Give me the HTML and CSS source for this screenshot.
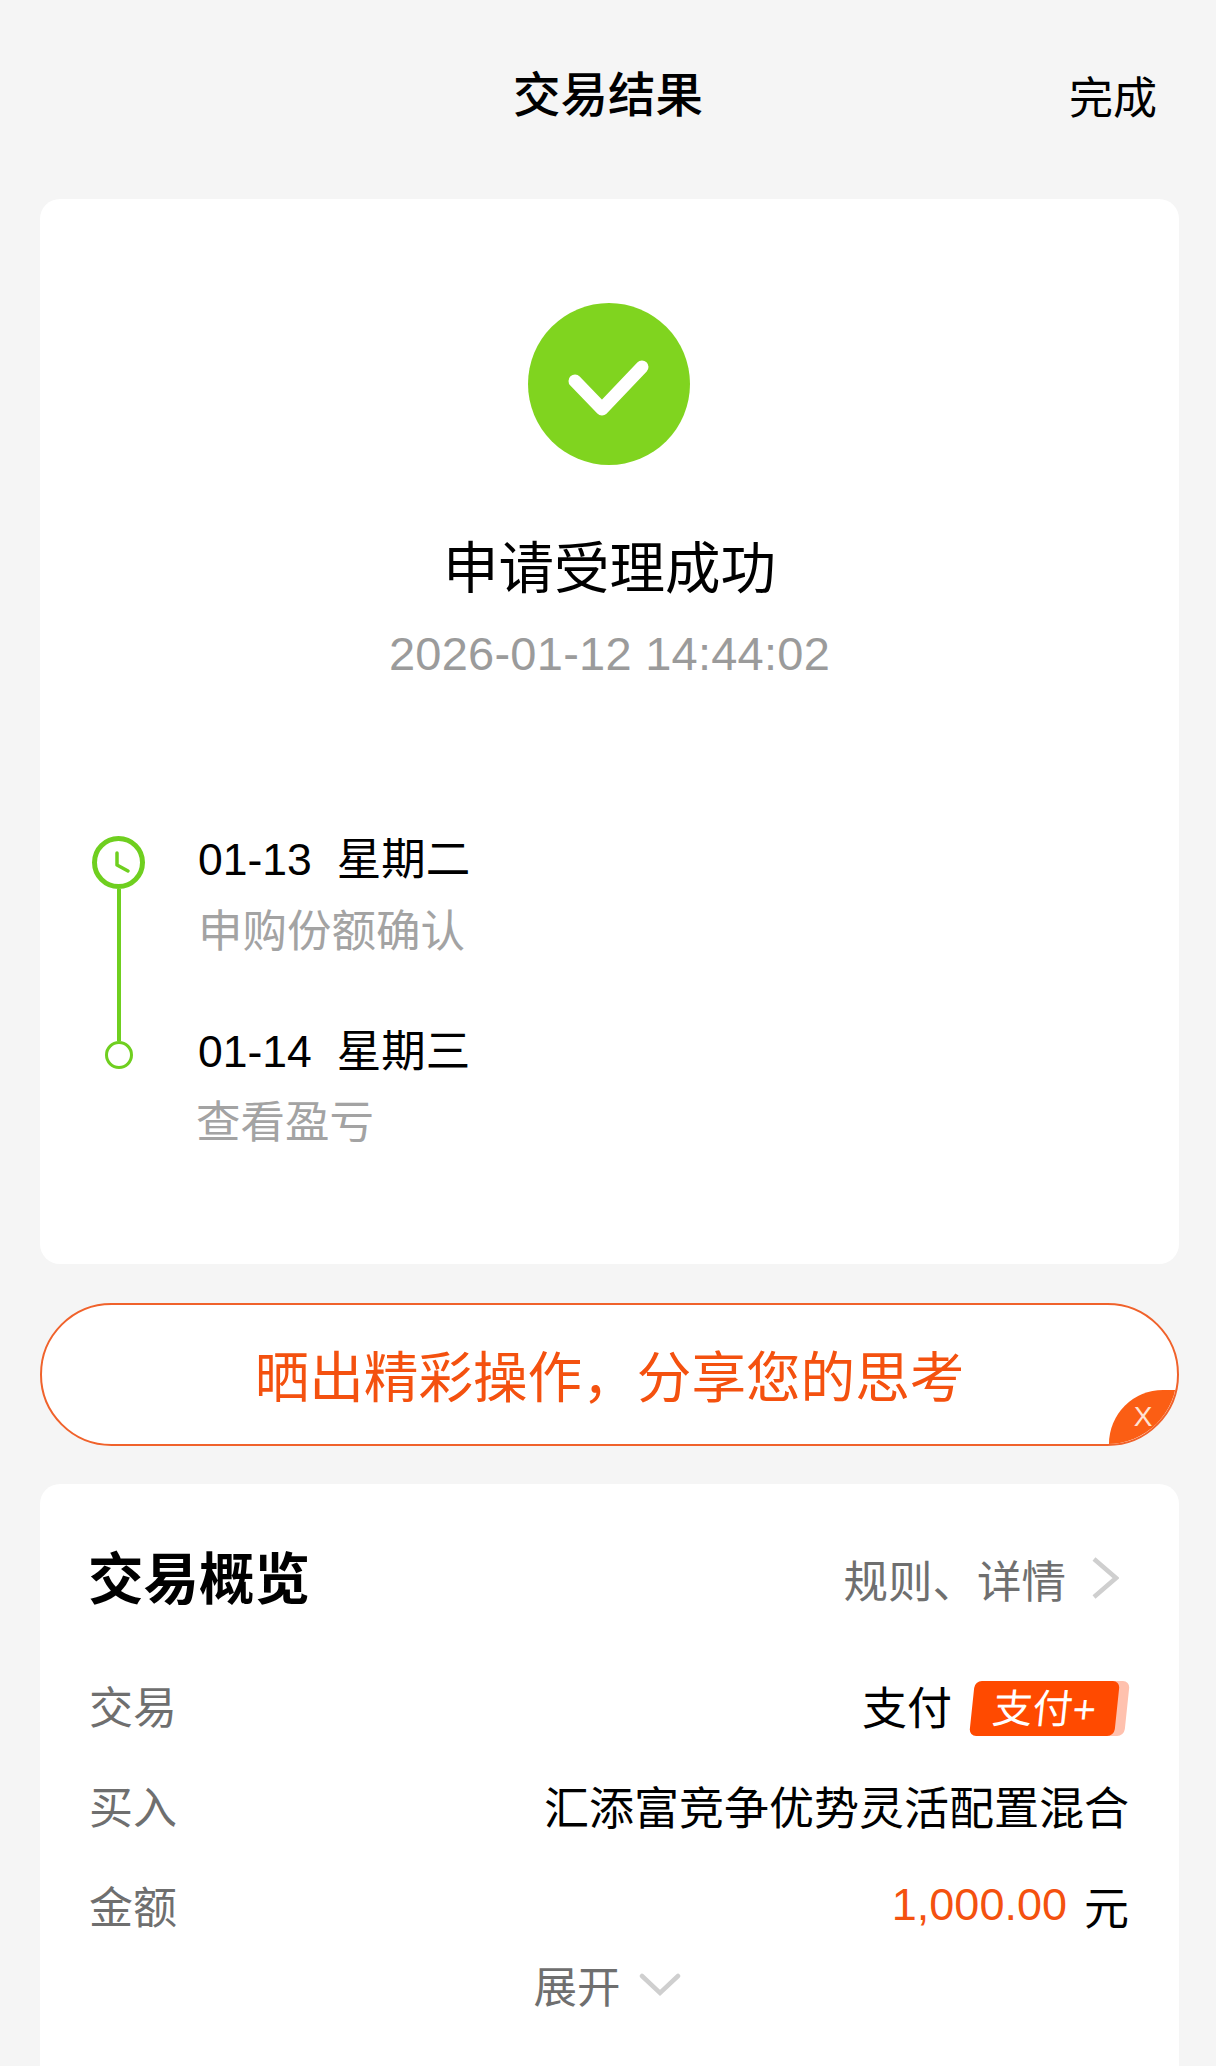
FILE: index.html
```html
<!DOCTYPE html>
<html>
    <head>
        <meta charset="utf-8">
        <title>交易结果</title>
        <link rel="stylesheet" href="styles.css">
    </head>
    <body>
        <div class="header">
            <div></div>
            <div class="header_title">交易结果</div>
            <div class="header_done">完成</div>
        </div>

        <div class="card result">
            <svg class="result_icon" viewBox="0 0 162 162">
                <circle cx="81" cy="81" r="81" fill="#80d41f" />
                <path d="M47 78 L74 106 L114 64" fill="none" stroke="#fff" stroke-width="13" stroke-linecap="round" stroke-linejoin="round" />
            </svg>
            <div class="result_title">申请受理成功</div>
            <div class="result_time">2026-01-12 14:44:02</div>

            <div class="timeline">
                <div class="rail">
                    <svg class="rail_clock" viewBox="0 0 53 53">
                        <circle cx="26.5" cy="26.5" r="24" fill="none" stroke="#6fcf1f" stroke-width="5" />
                        <path d="M25 17 V29 L36 35" fill="none" stroke="#6fcf1f" stroke-width="3.5" stroke-linecap="round" stroke-linejoin="round" />
                    </svg>
                    <div class="rail_line"></div>
                    <div class="rail_dot"></div>
                </div>
                <div class="steps">
                    <div class="step">
                        <div class="step_date"><span>01-13</span><span>星期二</span></div>
                        <div class="step_note step_note_first">申购份额确认</div>
                    </div>
                    <div class="step">
                        <div class="step_date"><span>01-14</span><span>星期三</span></div>
                        <div class="step_note step_note_last">查看盈亏</div>
                    </div>
                </div>
            </div>
        </div>

        <div class="banner">
            晒出精彩操作，分享您的思考
            <div class="banner_close">X</div>
        </div>

        <div class="card overview">
            <div class="overview_head">
                <div class="overview_title">交易概览</div>
                <div class="overview_link">
                    规则、详情
                    <svg class="chevron_right" viewBox="0 0 28 44">
                        <path d="M3 3 L25 22 L3 41" fill="none" stroke="#cfcfcf" stroke-width="4.5" />
                    </svg>
                </div>
            </div>
            <div class="row">
                <div class="row_label">交易</div>
                <div class="row_value">
                    支付
                    <div class="badge">
                        <div class="badge_shadow"></div>
                        <div class="badge_face">支付+</div>
                    </div>
                </div>
            </div>
            <div class="row">
                <div class="row_label">买入</div>
                <div class="row_value">汇添富竞争优势灵活配置混合</div>
            </div>
            <div class="row">
                <div class="row_label">金额</div>
                <div class="row_value"><span class="amount">1,000.00</span>元</div>
            </div>
            <div class="expand">
                展开
                <svg class="chevron_down" viewBox="0 0 42 24">
                    <path d="M3 3 L21 20 L39 3" fill="none" stroke="#cfcfcf" stroke-width="4.5" stroke-linecap="round" />
                </svg>
            </div>
        </div>
    </body>
</html>
```

FILE: styles.css
```css
html, body {
    margin: 0;
    height: 2066px;
    overflow: hidden;
}

body {
    background: #f5f5f5;
    color: #000;
    font-family: "Liberation Sans", "Noto Sans CJK SC", sans-serif;
    font-size: 44.5px;
}

.header {
    display: grid;
    grid-template-columns: 1fr auto 1fr;
    align-items: center;
    height: 199px;
    box-sizing: border-box;
    padding: 0 59px 17px;
}

.header_title {
    font-size: 47.5px;
    font-weight: 500;
}

.header_done {
    justify-self: end;
    padding-top: 8px;
    font-size: 44px;
}

.card {
    margin: 0 37px 0 40px;
    background: #fff;
    border-radius: 20px;
}

.result {
    display: flex;
    flex-direction: column;
    align-items: center;
    height: 1065px;
    box-sizing: border-box;
    padding-top: 104px;
}

.result_icon {
    width: 162px;
    height: 162px;
    margin-right: 2px;
}

.result_title {
    margin-top: 64px;
    font-size: 55.5px;
    line-height: 80px;
}

.result_time {
    margin-top: 18px;
    color: #9b9b9b;
    font-size: 47px;
    letter-spacing: 0.25px;
    line-height: 54px;
}

.timeline {
    display: flex;
    align-self: stretch;
    margin-top: 149px;
    padding-left: 52px;
}

.rail {
    display: flex;
    flex-direction: column;
    align-items: center;
    width: 53px;
    margin-top: 6px;
    height: 233px;
}

.rail_clock {
    width: 53px;
    height: 53px;
    flex: none;
}

.rail_line {
    flex: 1;
    width: 4px;
    background: #6fcf1f;
}

.rail_dot {
    flex: none;
    width: 28px;
    height: 28px;
    box-sizing: border-box;
    border: 3px solid #6fcf1f;
    border-radius: 50%;
}

.steps {
    margin-left: 53px;
}

.step {
    height: 192px;
}

.step_date {
    display: flex;
    gap: 25px;
    line-height: 60px;
}

.step_note {
    margin-top: 11px;
    color: #a3a3a3;
    line-height: 60px;
}

.step_note_first {
    margin-top: 12px;
}

.step_note_last {
    margin-left: -2px;
}

.banner {
    position: relative;
    overflow: hidden;
    display: flex;
    justify-content: center;
    align-items: center;
    height: 143px;
    margin: 39px 37px 38px 40px;
    padding-bottom: 2px;
    box-sizing: border-box;
    border: 2px solid #f0622b;
    border-radius: 72px;
    background: #fff;
    color: #f4510f;
    font-size: 54.6px;
}

.banner_close {
    position: absolute;
    right: 0;
    bottom: 0;
    width: 68px;
    height: 54px;
    border-radius: 54px 0 54px 0;
    background: #fb5e14;
    color: #ffe3d2;
    font-family: "Liberation Sans", sans-serif;
    font-size: 28px;
    line-height: 54px;
    text-align: center;
}

.overview {
    height: 640px;
    padding: 0 50px 0 49px;
}

.overview_head {
    display: flex;
    justify-content: space-between;
    align-items: center;
    height: 182px;
    margin-bottom: -11px;
}

.overview_title {
    margin-left: -1px;
    font-size: 55.5px;
    font-weight: 700;
}

.overview_link {
    display: flex;
    align-items: center;
    gap: 25px;
    margin-right: 10px;
    padding-top: 6px;
    color: #6f6f6f;
}

.chevron_right {
    width: 28px;
    height: 44px;
}

.row {
    display: flex;
    justify-content: space-between;
    align-items: center;
    height: 100px;
}

.row_label {
    color: #6f6f6f;
    font-size: 44px;
}

.row_value {
    display: flex;
    align-items: center;
    font-size: 45px;
}

.badge {
    position: relative;
    width: 160px;
    height: 55px;
    margin: 6px 0 0 17px;
}

.badge_shadow,
.badge_face {
    position: absolute;
    top: 0;
    height: 55px;
    border-radius: 7px;
    transform: skewX(-6deg);
}

.badge_shadow {
    left: 20px;
    width: 138px;
    background: #ffc1ae;
}

.badge_face {
    left: 3px;
    width: 145px;
    background: #ff4a00;
    color: #fff;
    font-size: 40px;
    line-height: 57px;
    text-align: center;
}

.amount {
    margin-right: 17px;
    color: #f4510f;
}

.expand {
    display: flex;
    justify-content: center;
    align-items: center;
    gap: 18px;
    margin: -2px 0 0 -4px;
    color: #6f6f6f;
    font-size: 43.5px;
}

.chevron_down {
    width: 42px;
    height: 24px;
}
```
